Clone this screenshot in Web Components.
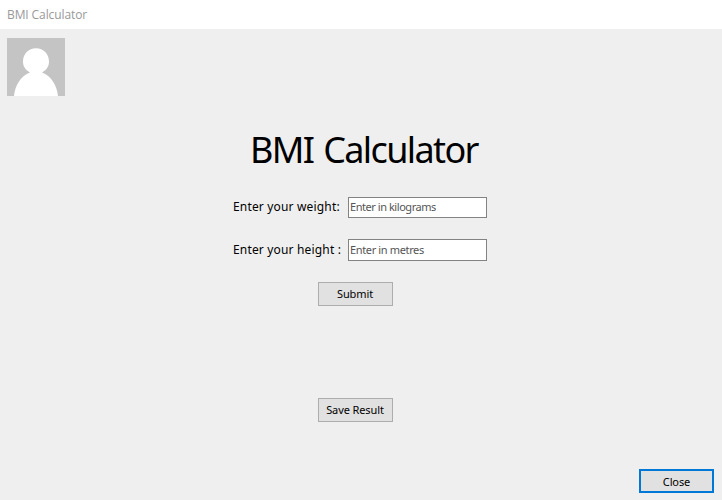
<!DOCTYPE html>
<html lang="en">
<head>
<meta charset="utf-8">
<title>BMI Calculator</title>
<style>
html, body { margin: 0; height: 100%; overflow: hidden; }
body { font-family: "Noto Sans", sans-serif; color: #000; }
</style>
</head>
<body>
<bmi-window></bmi-window>
<script>
const define = (name, html) => customElements.define(name, class extends HTMLElement {
  constructor() {
    super();
    const t = document.createElement('template');
    t.innerHTML = html;
    this.attachShadow({ mode: 'open' }).append(t.content.cloneNode(true));
  }
});

define('title-bar', `
<style>
:host { display: flex; align-items: center; box-sizing: border-box; height: 29px; padding: 0 7px 1px; background: #fff; color: #999; font: 12px "Open Sans", sans-serif; letter-spacing: -0.1px; white-space: nowrap; }
</style><slot></slot>`);

define('user-avatar', `
<style>
:host { display: block; width: 58px; height: 58px; }
svg { display: block; }
</style>
<svg width="58" height="58" viewBox="0 0 58 58">
<rect width="58" height="58" fill="#c4c4c4"/>
<path fill="#fff" d="M7 58C8 47 14 38 23 34.500C18 31.500 16 28 16 23.500C16 16 21.500 10.300 29 10.300C36.500 10.300 42 16 42 23.500C42 28 40 31.500 35 34.500C44 38 50 47 51 58Z"/>
</svg>`);

define('form-field', `
<style>
:host { display: flex; align-items: flex-start; height: 22px; font-size: 12px; white-space: nowrap; }
.label { width: 115px; letter-spacing: var(--label-spacing, 0); line-height: 16px; padding-top: var(--text-top, 2px); box-sizing: border-box; }
.box { flex: 1; height: var(--box-height, 22px); box-sizing: border-box; border: 1px solid #838383; background: #fff; color: #555; font-size: 11px; line-height: 18px; padding: var(--hint-top, 0) 0 0 1px; letter-spacing: var(--hint-spacing, 0); }
</style>
<span class="label"><slot></slot></span><div class="box"><slot name="hint"></slot></div>`);

define('push-button', `
<style>
:host { display: flex; align-items: center; justify-content: center; box-sizing: border-box; width: 75px; height: 24px; padding: 0 1px 1px 0; border: 1px solid #adadad; background: #e1e1e1; font-size: 11px; line-height: 15px; letter-spacing: -0.1px; white-space: nowrap; }
:host([default]) { border: 2px solid #0078d7; padding: 0; }
</style><slot></slot>`);

define('bmi-window', `
<style>
:host { display: flex; flex-direction: column; width: 722px; height: 500px; background: #efefef; }
main { flex: 1; display: flex; flex-direction: column; padding: 9px 8px 7px 7px; }
h1 { margin: 28px 0 0 243px; font-weight: 400; font-size: 36px; line-height: 52px; letter-spacing: -1.62px; word-spacing: 2px; white-space: nowrap; }
.form { display: flex; flex-direction: column; gap: 20px; width: 254px; margin: 21px 0 0 226px; }
.form form-field { --label-spacing: 0.17px; --hint-spacing: -0.45px; --box-height: 21px; }
.form form-field + form-field { --hint-spacing: -0.36px; --box-height: 22px; --text-top: 3px; --hint-top: 1px; }
.actions { display: flex; flex-direction: column; gap: 92px; margin: 21px 0 0 311px; }
.close { margin: auto 0 0 auto; }
</style>
<title-bar>BMI Calculator</title-bar>
<main>
<user-avatar></user-avatar>
<h1>BMI Calculator</h1>
<div class="form">
<form-field>Enter your weight:<span slot="hint">Enter in kilograms</span></form-field>
<form-field>Enter your height :<span slot="hint">Enter in metres</span></form-field>
</div>
<div class="actions"><push-button>Submit</push-button><push-button>Save Result</push-button></div>
<push-button class="close" default>Close</push-button>
</main>`);
</script>
</body>
</html>
